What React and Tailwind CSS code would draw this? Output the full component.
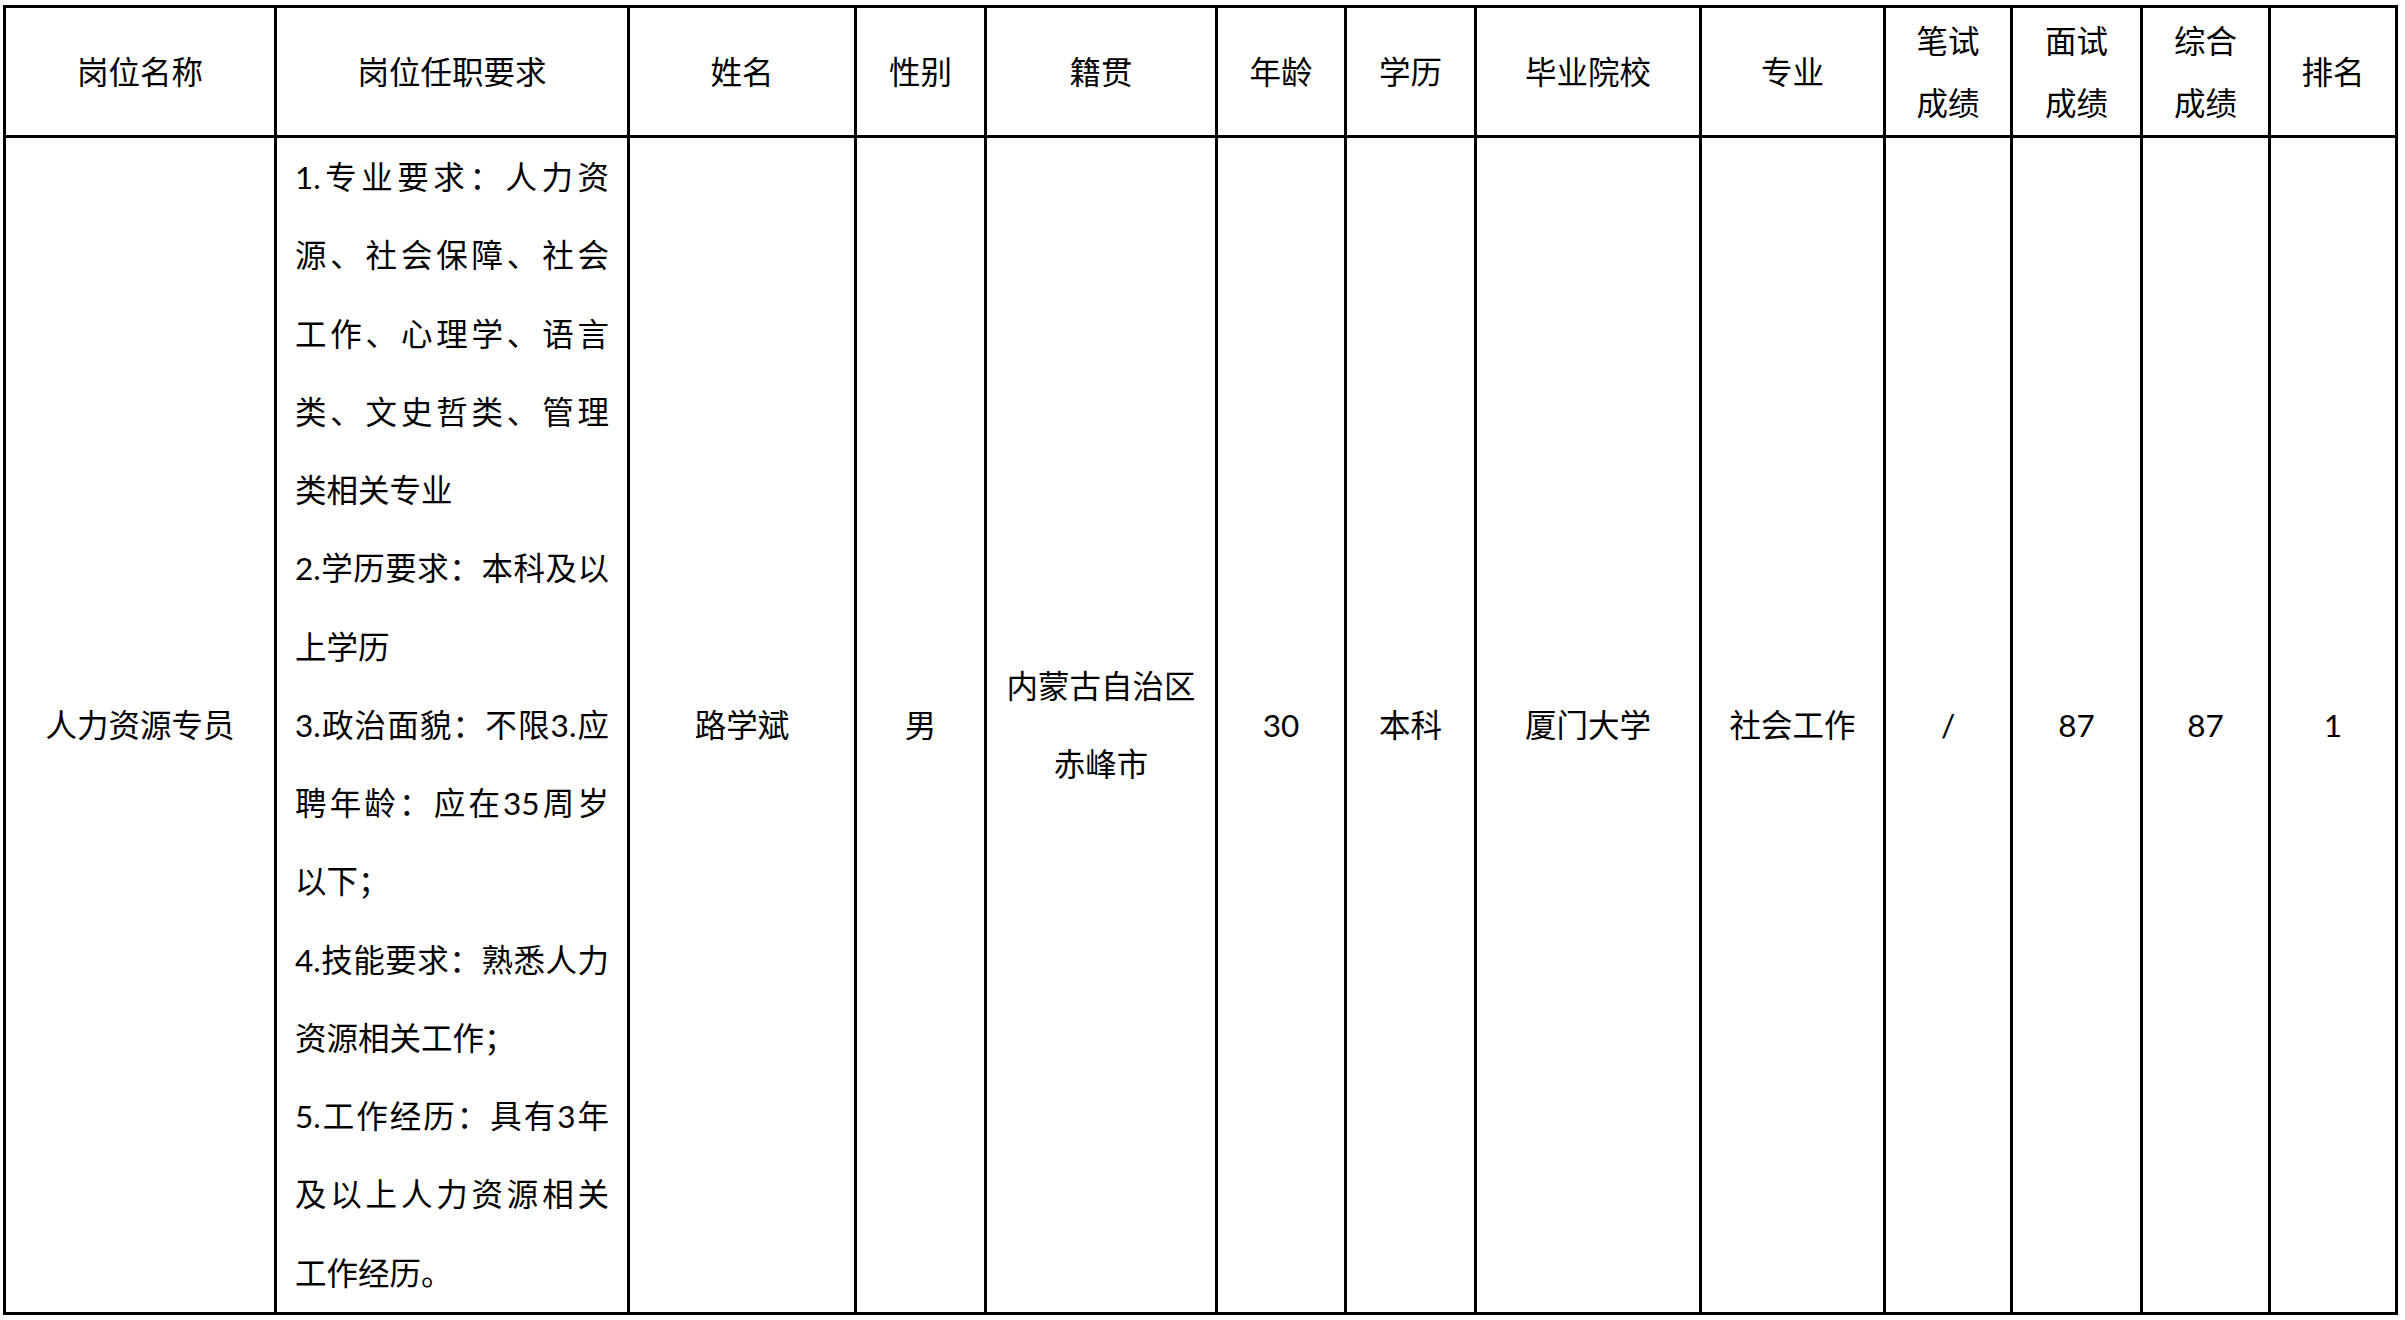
import React from "react";

const headers = [
  ["岗位名称"],
  ["岗位任职要求"],
  ["姓名"],
  ["性别"],
  ["籍贯"],
  ["年龄"],
  ["学历"],
  ["毕业院校"],
  ["专业"],
  ["笔试", "成绩"],
  ["面试", "成绩"],
  ["综合", "成绩"],
  ["排名"],
];

// each entry is one printed line; `last` lines are not stretched
const requirements = [
  { t: "1.专业要求：人力资" },
  { t: "源、社会保障、社会" },
  { t: "工作、心理学、语言" },
  { t: "类、文史哲类、管理" },
  { t: "类相关专业", last: true },
  { t: "2.学历要求：本科及以" },
  { t: "上学历", last: true },
  { t: "3.政治面貌：不限3.应" },
  { t: "聘年龄：应在35周岁" },
  { t: "以下；", last: true },
  { t: "4.技能要求：熟悉人力" },
  { t: "资源相关工作；", last: true },
  { t: "5.工作经历：具有3年" },
  { t: "及以上人力资源相关" },
  { t: "工作经历。", last: true },
];

const values = [
  ["路学斌"],
  ["男"],
  ["内蒙古自治区", "赤峰市"],
  ["30"],
  ["本科"],
  ["厦门大学"],
  ["社会工作"],
  ["/"],
  ["87"],
  ["87"],
  ["1"],
];

function Cell({ lines, leading }) {
  return (
    <div className={`bg-white flex flex-col items-center justify-center text-center ${leading}`}>
      {lines.map((l, i) => (
        <div key={i}>{l}</div>
      ))}
    </div>
  );
}

export default function App() {
  return (
    <div
      className="min-h-screen bg-white text-black text-[31.5px]"
      style={{ fontFamily: 'Lato, "Noto Sans CJK SC", sans-serif' }}
    >
      <div className="ml-[3px] pt-[5px]">
        <div className="grid w-fit bg-black p-[3px] gap-[3px] grid-cols-[268px_350px_224px_127px_228px_126px_127px_222px_181px_124px_127px_125px_124px] grid-rows-[127px_1174px]">
          {/* Header row */}
          {headers.map((h, i) => (
            <Cell key={i} lines={h} leading="leading-[62px]" />
          ))}

          {/* Body row */}
          <Cell lines={["人力资源专员"]} leading="leading-[78px]" />

          <div className="bg-white flex flex-col justify-center px-[18px] leading-[78.27px]">
            {requirements.map((r, i) => (
              <div
                key={i}
                className={r.last ? "text-left" : "text-justify [text-align-last:justify]"}
              >
                {r.t}
              </div>
            ))}
          </div>

          {values.map((v, i) => (
            <Cell key={i} lines={v} leading="leading-[78px]" />
          ))}
        </div>
      </div>
    </div>
  );
}
